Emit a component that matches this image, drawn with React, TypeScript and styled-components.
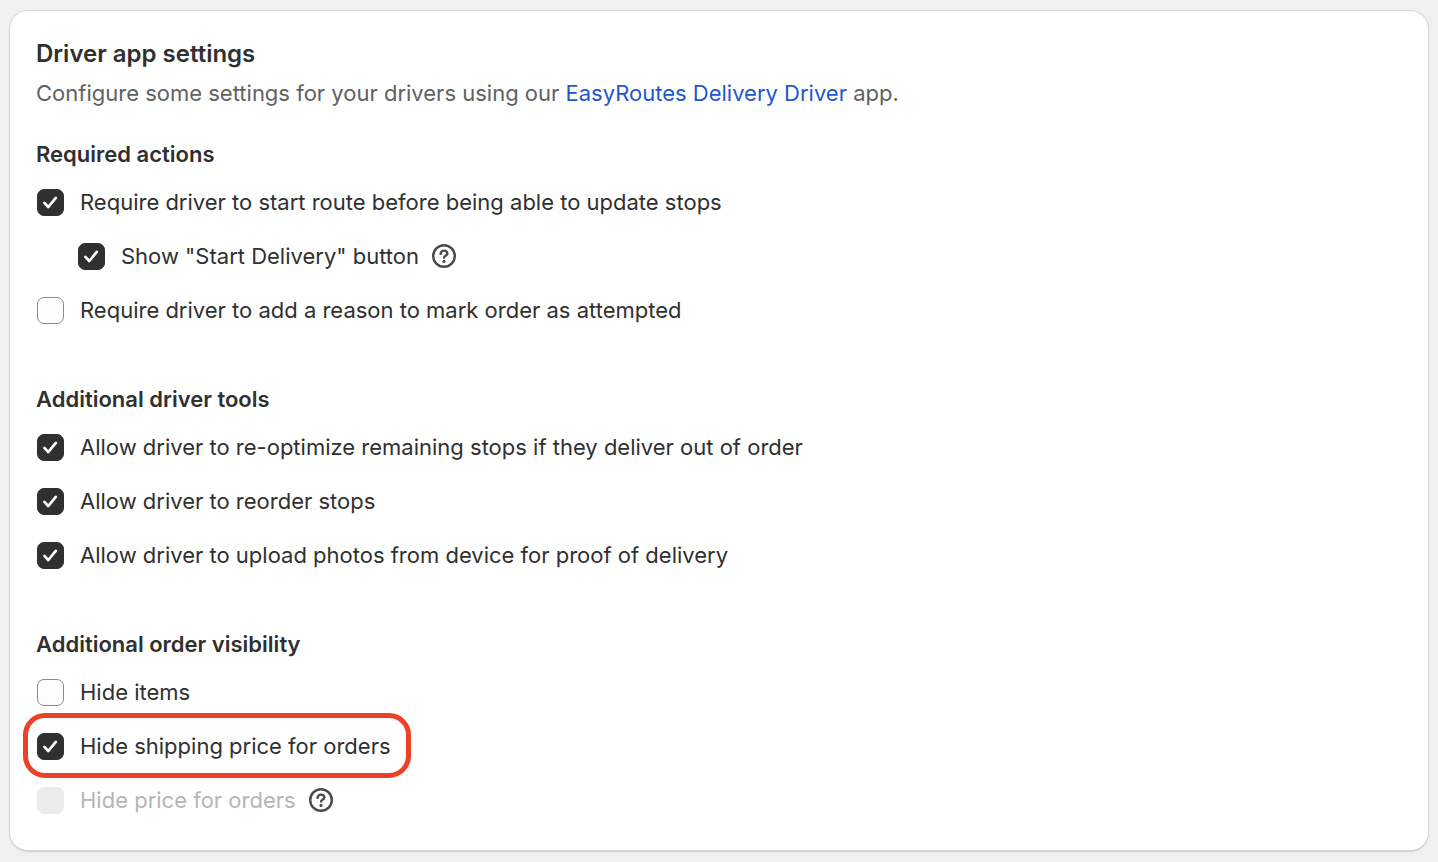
import React, { useId, useState } from "react";
import styled, { createGlobalStyle, css } from "styled-components";

const GlobalStyle = createGlobalStyle`
  *, *::before, *::after { box-sizing: border-box; }
  body {
    margin: 0;
    background: #f0f0f0;
    color: #303030;
    font-family: Inter, "Liberation Sans", sans-serif;
    font-size: 22px;
    line-height: 28px;
  }
`;

const Page = styled.main`
  padding: 11px 10px 10px;
`;

const Card = styled.section`
  padding: 27px 26px 36px;
  border-radius: 18px;
  background: #ffffff;
  box-shadow: 0 0 0 1px #d8d8d8, 0 1px 1px 1px #cfcfcf;
`;

const Title = styled.h1`
  margin: 0;
  font-size: 24px;
  line-height: 32px;
  font-weight: 600;
`;

const Intro = styled.p`
  margin: 9px 0 0;
  color: #616161;
`;

const Link = styled.a`
  color: #1f57d0;
  text-decoration: none;
`;

const Group = styled.fieldset<{ $first?: boolean }>`
  margin: ${(p) => (p.$first ? 33 : 61)}px 0 0;
  padding: 0;
  border: 0;
  min-width: 0;
`;

const GroupTitle = styled.legend`
  padding: 0;
  margin-bottom: 20px;
  font-weight: 600;
`;

const Options = styled.div`
  display: flex;
  flex-direction: column;
  align-items: flex-start;
  gap: 26px;
`;

const Row = styled.div<{ $nested?: boolean }>`
  position: relative;
  display: flex;
  align-items: center;
  gap: 12px;
  margin-left: ${(p) => (p.$nested ? 42 : 1)}px;
`;

const Highlight = styled.span`
  position: absolute;
  inset: -19px -20px -18px -14px;
  border: 5px solid #ec4126;
  border-radius: 22px;
  pointer-events: none;
`;

const OptionLabel = styled.label<{ $disabled?: boolean }>`
  display: flex;
  align-items: center;
  gap: 16px;
  color: ${(p) => (p.$disabled ? "#b5b5b5" : "#303030")};
`;

const checked = css`
  background: #303030 url("data:image/svg+xml,%3Csvg xmlns='http://www.w3.org/2000/svg' viewBox='0 0 27 27' fill='none' stroke='white' stroke-width='2.7' stroke-linecap='round' stroke-linejoin='round'%3E%3Cpath d='M7.4 13.9l3.9 4.1 7.5-9.1'/%3E%3C/svg%3E") center / 27px 27px;
  border-color: #303030;
`;

const Box = styled.input`
  appearance: none;
  flex: none;
  width: 27px;
  height: 27px;
  margin: 0;
  border: 1px solid #8a8a8a;
  border-radius: 7px;
  background: #fdfdfd;
  &:checked { ${checked} }
  &:disabled { background: #ebebeb; border-color: #ebebeb; }
`;

const HelpButton = styled.button`
  display: flex;
  padding: 0;
  border: 0;
  background: none;
  color: #4a4a4a;
`;

function Help({ label }: { label: string }) {
  return (
    <HelpButton type="button" aria-label={label}>
      <svg width="26" height="26" viewBox="0 0 26 26" fill="none" stroke="currentColor" strokeWidth="2.4" strokeLinecap="round" strokeLinejoin="round">
        <circle cx="13" cy="13" r="10.8" />
        <path d="M9.6 10.9c0-1.9 1.5-3.3 3.4-3.3s3.4 1.3 3.4 3c0 2.2-3.3 2.2-3.3 4" />
        <circle cx="13" cy="18.4" r="1.6" fill="currentColor" stroke="none" />
      </svg>
    </HelpButton>
  );
}

interface OptionProps {
  label: string;
  on?: boolean;
  nested?: boolean;
  disabled?: boolean;
  help?: string;
  highlighted?: boolean;
}

function Option({ label, on = false, nested, disabled, help, highlighted }: OptionProps) {
  const id = useId();
  const [value, setValue] = useState(on);
  return (
    <Row $nested={nested}>
      <OptionLabel htmlFor={id} $disabled={disabled}>
        <Box id={id} type="checkbox" checked={value} disabled={disabled} onChange={(e) => setValue(e.target.checked)} />
        {label}
      </OptionLabel>
      {help && <Help label={help} />}
      {highlighted && <Highlight />}
    </Row>
  );
}

export default function App() {
  return (
    <Page>
      <GlobalStyle />
      <Card>
        <Title>Driver app settings</Title>
        <Intro>
          Configure some settings for your drivers using our <Link href="#driver-app">EasyRoutes Delivery Driver</Link> app.
        </Intro>
        <Group $first>
          <GroupTitle>Required actions</GroupTitle>
          <Options>
            <Option on label="Require driver to start route before being able to update stops" />
            <Option on nested label={'Show "Start Delivery" button'} help="About the Start Delivery button" />
            <Option label="Require driver to add a reason to mark order as attempted" />
          </Options>
        </Group>
        <Group>
          <GroupTitle>Additional driver tools</GroupTitle>
          <Options>
            <Option on label="Allow driver to re-optimize remaining stops if they deliver out of order" />
            <Option on label="Allow driver to reorder stops" />
            <Option on label="Allow driver to upload photos from device for proof of delivery" />
          </Options>
        </Group>
        <Group>
          <GroupTitle>Additional order visibility</GroupTitle>
          <Options>
            <Option label="Hide items" />
            <Option on highlighted label="Hide shipping price for orders" />
            <Option disabled label="Hide price for orders" help="About hiding order prices" />
          </Options>
        </Group>
      </Card>
    </Page>
  );
}
